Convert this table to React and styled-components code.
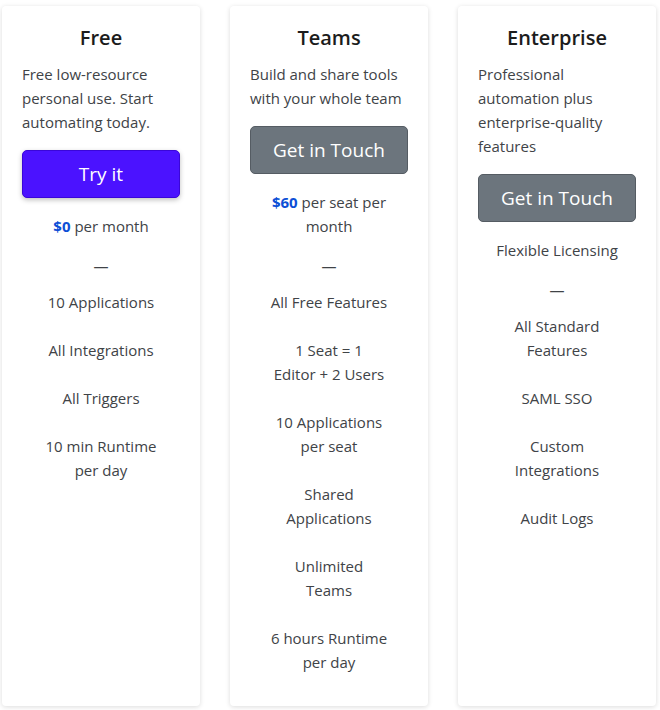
import React from 'react';
import styled, { createGlobalStyle } from 'styled-components';

const GlobalStyle = createGlobalStyle`
  body {
    margin: 0;
    background: #fff;
    font-family: 'Open Sans', 'Noto Sans', sans-serif;
  }
`;

const Page = styled.div`
  display: grid;
  grid-template-columns: repeat(3, 198px);
  gap: 30px;
  padding: 6px 0 4px 2px;
  height: 700px;
`;

const Card = styled.div`
  background: #fff;
  border-radius: 4px;
  box-shadow: 0 1px 5px rgba(0, 0, 0, 0.14);
  padding: 20px 20px 8px;
  display: flex;
  flex-direction: column;
  align-items: stretch;
`;

const Title = styled.h5`
  margin: 0 0 12px;
  font-size: 20px;
  font-weight: 600;
  line-height: 24px;
  text-align: center;
  color: #1c1c1c;
`;

const Desc = styled.p`
  margin: 0 0 16px;
  font-size: 15px;
  line-height: 24px;
  color: #404347;
`;

const Button = styled.button`
  font-family: inherit;
  font-size: 19px;
  line-height: 30px;
  padding: 8px 12px;
  width: 100%;
  color: #fff;
  border-radius: 5px;
  cursor: pointer;
  background: ${(p) => (p.$primary ? '#4b12ff' : '#6c757d')};
  border: 1px solid ${(p) => (p.$primary ? '#3a06d9' : '#555c63')};
  box-shadow: ${(p) => (p.$primary ? '0 2px 5px rgba(0, 0, 0, 0.25)' : 'none')};
`;

const Price = styled.p`
  margin: 16px 0 16px;
  font-size: 15px;
  line-height: 24px;
  text-align: center;
  color: #404347;
`;

const Amount = styled.strong`
  color: #0d4fd6;
  font-weight: 700;
`;

const Dash = styled.p`
  margin: 0 0 12px;
  font-size: 15px;
  line-height: 24px;
  text-align: center;
  color: #404347;
`;

const Features = styled.ul`
  list-style: none;
  margin: 0;
  padding: 0;
`;

const Feature = styled.li`
  margin: 0 0 24px;
  font-size: 15px;
  line-height: 24px;
  text-align: center;
  color: #404347;
`;

const plans = [
  {
    name: 'Free',
    desc: 'Free low-resource personal use. Start automating today.',
    cta: 'Try it',
    primary: true,
    amount: '$0',
    price: 'per month',
    features: [['10 Applications'], ['All Integrations'], ['All Triggers'], ['10 min Runtime', 'per day']],
  },
  {
    name: 'Teams',
    desc: 'Build and share tools with your whole team',
    cta: 'Get in Touch',
    amount: '$60',
    price: 'per seat per month',
    features: [
      ['All Free Features'],
      ['1 Seat = 1', 'Editor + 2 Users'],
      ['10 Applications', 'per seat'],
      ['Shared', 'Applications'],
      ['Unlimited', 'Teams'],
      ['6 hours Runtime', 'per day'],
    ],
  },
  {
    name: 'Enterprise',
    desc: 'Professional automation plus enterprise-quality features',
    cta: 'Get in Touch',
    price: 'Flexible Licensing',
    features: [['All Standard', 'Features'], ['SAML SSO'], ['Custom', 'Integrations'], ['Audit Logs']],
  },
];

const App = () => {
  return (
    <>
      <GlobalStyle />
      <Page>
        {plans.map((plan) => (
          <Card key={plan.name}>
            <Title>{plan.name}</Title>
            <Desc>{plan.desc}</Desc>
            <Button $primary={plan.primary}>{plan.cta}</Button>
            <Price>
              {plan.amount && <Amount>{plan.amount}</Amount>} {plan.price}
            </Price>
            <Dash>—</Dash>
            <Features>
              {plan.features.map((lines) => (
                <Feature key={lines.join(' ')}>
                  {lines.map((line, i) => (
                    <React.Fragment key={line}>
                      {i > 0 && <br />}
                      {line}
                    </React.Fragment>
                  ))}
                </Feature>
              ))}
            </Features>
          </Card>
        ))}
      </Page>
    </>
  );
};

export default App;
